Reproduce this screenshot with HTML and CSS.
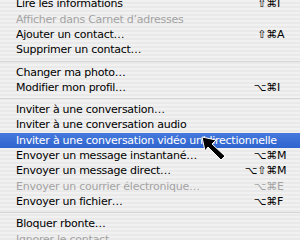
FILE: index.html
```html
<!DOCTYPE html>
<html lang="fr">
<head>
    <meta charset="UTF-8">
    <title>Menu contact</title>
    <link rel="stylesheet" href="styles.css">
</head>
<body>
    <div class="menu">
        <div class="item"><span class="label">Lire les informations</span><span class="mods">⇧⌘</span><span class="key">I</span></div>
        <div class="item disabled"><span class="label">Afficher dans Carnet d’adresses</span></div>
        <div class="item"><span class="label">Ajouter un contact…</span><span class="mods">⇧⌘</span><span class="key">A</span></div>
        <div class="item"><span class="label">Supprimer un contact…</span></div>
        <div class="sep"></div>
        <div class="item"><span class="label">Changer ma photo…</span></div>
        <div class="item"><span class="label">Modifier mon profil…</span><span class="mods">⌥⌘</span><span class="key">I</span></div>
        <div class="sep"></div>
        <div class="item"><span class="label">Inviter à une conversation…</span></div>
        <div class="item"><span class="label">Inviter à une conversation audio</span></div>
        <div class="item selected"><span class="label">Inviter à une conversation vidéo unidirectionnelle</span></div>
        <div class="item"><span class="label">Envoyer un message instantané…</span><span class="mods">⌥⌘</span><span class="key">M</span></div>
        <div class="item"><span class="label">Envoyer un message direct…</span><span class="mods">⌥⇧⌘</span><span class="key">M</span></div>
        <div class="item disabled"><span class="label">Envoyer un courrier électronique…</span><span class="mods">⌥⌘</span><span class="key">E</span></div>
        <div class="item"><span class="label">Envoyer un fichier…</span><span class="mods">⌥⌘</span><span class="key">F</span></div>
        <div class="sep"></div>
        <div class="item"><span class="label">Bloquer rbonte…</span></div>
        <div class="item disabled"><span class="label">Ignorer le contact</span></div>
    </div>

    <!-- mouse pointer over the selected row -->
    <svg class="pointer" width="28" height="26" viewBox="0 0 28 26">
        <polygon points="1,1 15,4 11,8 24,20 20,24 7,11 4,15" fill="#000" stroke="#fff" stroke-width="1"/>
    </svg>
</body>
</html>
```

FILE: styles.css
```css
* {
    margin: 0;
    padding: 0;
    box-sizing: border-box;
}
body {
    width: 300px;
    height: 240px;
    overflow: hidden;
    position: relative;
    background: #eeeeee;
    font-family: "DejaVu Sans", Verdana, sans-serif;
    font-size: 11px;
    letter-spacing: -0.25px;
    color: #000;
}
.menu {
    margin-top: -3.65px;
    background: repeating-linear-gradient(#f1f1f1 0, #f1f1f1 2px, #e9e9e9 2px, #e9e9e9 4px);
}
.item {
    display: flex;
    height: 15.3px;
    line-height: 15.3px;
    padding: 0 8px 0 16px;
    white-space: nowrap;
}
.item .label {
    flex: 1;
}
.item .mods {
    text-align: right;
}
.item .key {
    width: 15px;
}
.item.disabled {
    color: #a3a3a3;
}
.item.selected {
    background: linear-gradient(#4679dc, #2f64cf);
    color: #fff;
}
.sep {
    height: 7px;
    padding-top: 3px;
}
.sep::after {
    content: "";
    display: block;
    height: 1px;
    background: #d6d6d6;
}
.pointer {
    position: absolute;
    left: 201px;
    top: 136px;
}
```
